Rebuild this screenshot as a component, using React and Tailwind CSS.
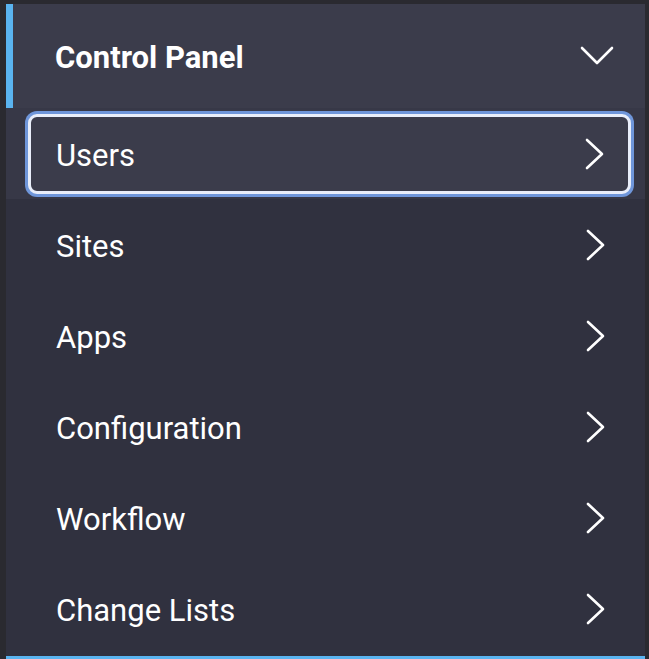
const items = ["Users", "Sites", "Apps", "Configuration", "Workflow", "Change Lists"];

function ChevronRight() {
  return (
    <svg width="20" height="32" viewBox="0 0 20 32" fill="none" className="shrink-0">
      <polyline points="3,2 18,16 3,30" stroke="white" strokeWidth="2.6" strokeLinecap="round" strokeLinejoin="round" />
    </svg>
  );
}

function ChevronDown() {
  return (
    <svg width="34" height="20" viewBox="0 0 34 20" fill="none" className="shrink-0">
      <polyline points="2,2 17,17 32,2" stroke="white" strokeWidth="2.6" strokeLinecap="round" strokeLinejoin="round" />
    </svg>
  );
}

export default function App() {
  return (
    <div
      className="w-[649px] h-[659px] bg-[#2a2a30] pt-[4px] pl-[6px] overflow-hidden"
      style={{ fontFamily: "Roboto, 'Liberation Sans', sans-serif" }}
    >
      <div className="w-[639px] h-[655px] flex flex-col bg-[#30313f] border-b-[3px] border-[#5ab4f0]">
        {/* Header */}
        <div className="h-[104px] shrink-0 flex items-center bg-[#3b3c4b] border-l-[7px] border-[#5ab4f0] pl-[42px] pr-[31px]">
          <span className="flex-1 text-white text-[31px] font-bold leading-none pt-[2px]">Control Panel</span>
          <ChevronDown />
        </div>

        {/* List */}
        {items.map((label, i) => (
          <div
            key={label}
            className={
              i === 0
                ? "h-[91px] shrink-0 bg-[#373847] pt-[6px] pb-[5px] pl-[22px] pr-[14px] flex"
                : "h-[91px] shrink-0 flex items-center pl-[50px] pr-[40px]"
            }
          >
            {i === 0 ? (
              <div className="flex-1 flex items-center rounded-[9px] border-[3px] border-[#e9eefa] ring-[3px] ring-[#6f96da] bg-[#3b3c4b] pl-[25px] pr-[24px]">
                <span className="flex-1 text-white text-[31px] leading-none pt-[2px]">{label}</span>
                <ChevronRight />
              </div>
            ) : (
              <>
                <span className="flex-1 text-white text-[31px] leading-none pt-[4px]">{label}</span>
                <ChevronRight />
              </>
            )}
          </div>
        ))}
      </div>
    </div>
  );
}
